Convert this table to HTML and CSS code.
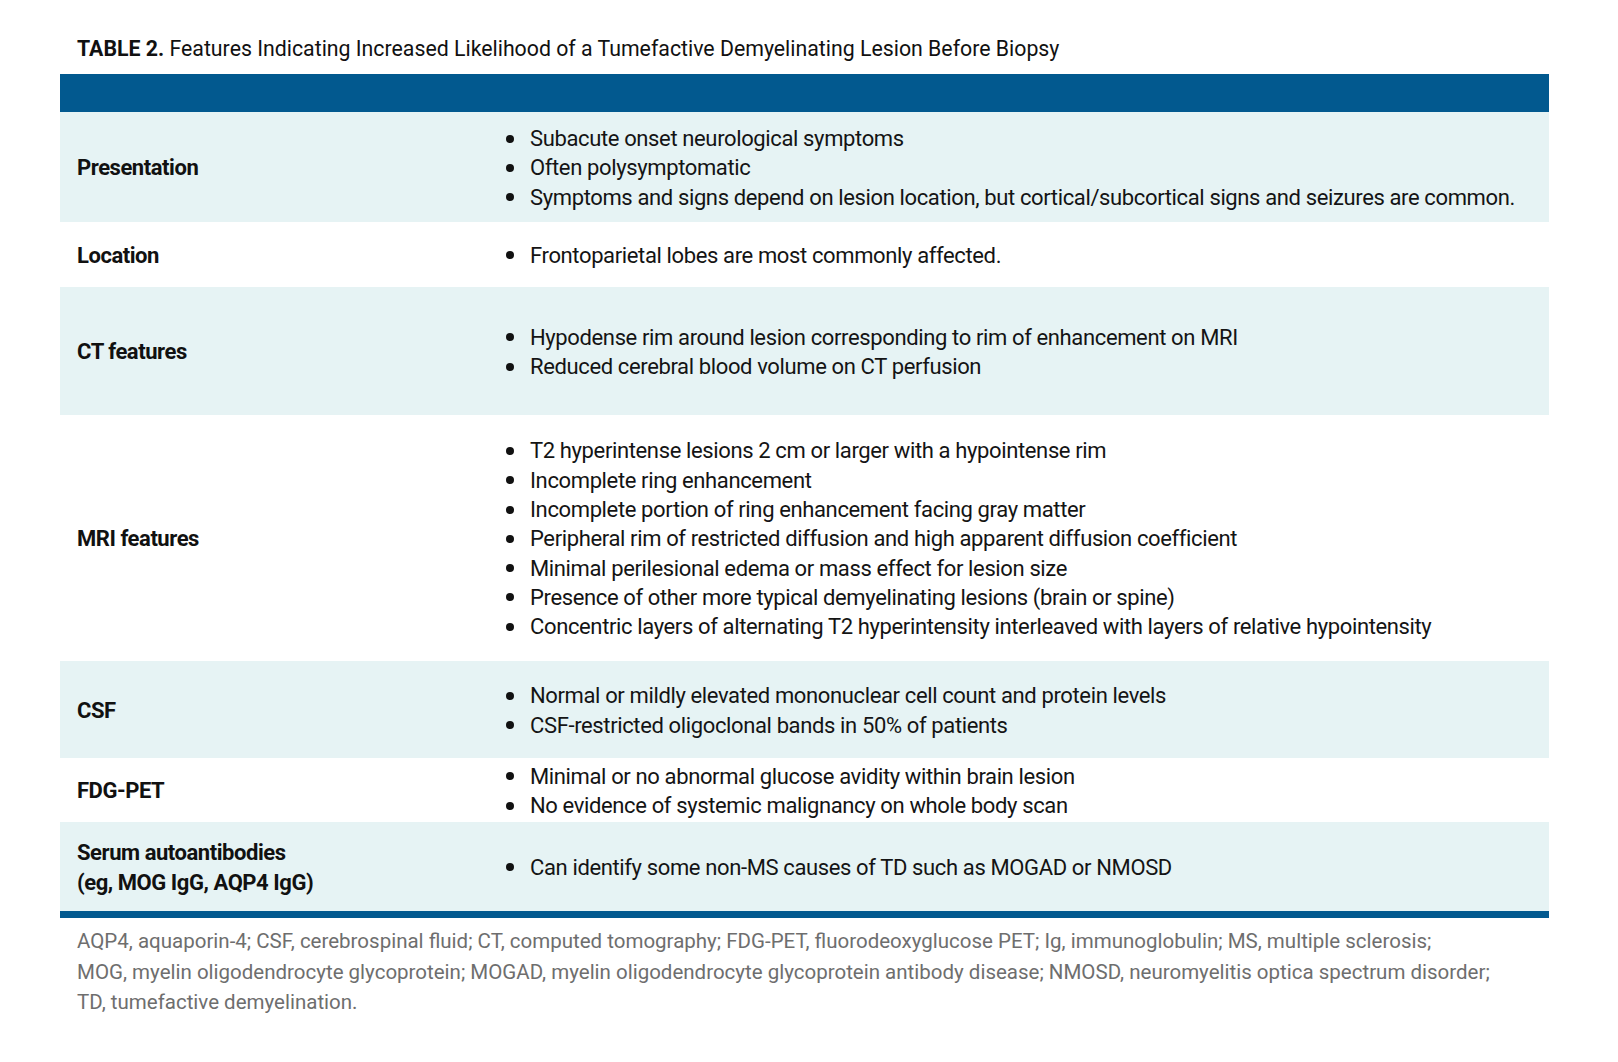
FILE: index.html
```html
<!DOCTYPE html>
<html lang="en">
<head>
<meta charset="utf-8">
<title>Table 2</title>
<link rel="stylesheet" href="styles.css">
</head>
<body>
<div class="page">
  <h1 class="title"><b>TABLE 2.</b> Features Indicating Increased Likelihood of a Tumefactive Demyelinating Lesion Before Biopsy</h1>
  <table class="tbl">
    <thead>
      <tr class="head"><th></th><th></th></tr>
    </thead>
    <tbody>
      <tr class="shade r-pres">
        <th>Presentation</th>
        <td><ul>
          <li>Subacute onset neurological symptoms</li>
          <li>Often polysymptomatic</li>
          <li>Symptoms and signs depend on lesion location, but cortical/subcortical signs and seizures are common.</li>
        </ul></td>
      </tr>
      <tr class="r-loc">
        <th>Location</th>
        <td><ul>
          <li>Frontoparietal lobes are most commonly affected.</li>
        </ul></td>
      </tr>
      <tr class="shade r-ct">
        <th>CT features</th>
        <td><ul>
          <li>Hypodense rim around lesion corresponding to rim of enhancement on MRI</li>
          <li>Reduced cerebral blood volume on CT perfusion</li>
        </ul></td>
      </tr>
      <tr class="r-mri">
        <th>MRI features</th>
        <td><ul>
          <li>T2 hyperintense lesions 2 cm or larger with a hypointense rim</li>
          <li>Incomplete ring enhancement</li>
          <li>Incomplete portion of ring enhancement facing gray matter</li>
          <li>Peripheral rim of restricted diffusion and high apparent diffusion coefficient</li>
          <li>Minimal perilesional edema or mass effect for lesion size</li>
          <li>Presence of other more typical demyelinating lesions (brain or spine)</li>
          <li>Concentric layers of alternating T2 hyperintensity interleaved with layers of relative hypointensity</li>
        </ul></td>
      </tr>
      <tr class="shade r-csf">
        <th>CSF</th>
        <td><ul>
          <li>Normal or mildly elevated mononuclear cell count and protein levels</li>
          <li>CSF-restricted oligoclonal bands in 50% of patients</li>
        </ul></td>
      </tr>
      <tr class="r-fdg">
        <th>FDG-PET</th>
        <td><ul>
          <li>Minimal or no abnormal glucose avidity within brain lesion</li>
          <li>No evidence of systemic malignancy on whole body scan</li>
        </ul></td>
      </tr>
      <tr class="shade r-serum">
        <th>Serum autoantibodies<br>(eg, MOG IgG, AQP4 IgG)</th>
        <td><ul>
          <li>Can identify some non-MS causes of TD such as MOGAD or NMOSD</li>
        </ul></td>
      </tr>
    </tbody>
  </table>
  <p class="note">AQP4, aquaporin-4; CSF, cerebrospinal fluid; CT, computed tomography; FDG-PET, fluorodeoxyglucose PET; Ig, immunoglobulin; MS, multiple sclerosis;<br>MOG, myelin oligodendrocyte glycoprotein; MOGAD, myelin oligodendrocyte glycoprotein antibody disease; NMOSD, neuromyelitis optica spectrum disorder;<br>TD, tumefactive demyelination.</p>
</div>
</body>
</html>
```
FILE: styles.css
```css
html, body {
  margin: 0;
  padding: 0;
  background: #ffffff;
}

body {
  font-family: Roboto, "Liberation Sans", Arial, sans-serif;
  color: #141414;
}

.page {
  width: 1489px;
  padding: 35px 0 0 60px;
}

.title {
  margin: 0 0 11px 0;
  padding-left: 17px;
  font-size: 21.3px;
  line-height: 28px;
  font-weight: 400;
  color: #111;
  white-space: nowrap;
}

.title b {
  font-weight: 700;
}

.tbl {
  width: 1489px;
  border-collapse: separate;
  border-spacing: 0;
  table-layout: fixed;
  border-bottom: 7px solid #02598f;
}

.tbl th,
.tbl td {
  padding: 2px 0 0 0;
  vertical-align: middle;
  text-align: left;
}

.tbl tr > th:first-child {
  width: 413px;
  padding-left: 17px;
  font-size: 22px;
  line-height: 30px;
  font-weight: 700;
  letter-spacing: -0.45px;
  color: #111;
}

.tbl td {
  padding-left: 15.5px;
  font-size: 22px;
  line-height: 29.3px;
  letter-spacing: -0.37px;
}

.head {
  height: 38px;
  background: #02598f;
}

.head th {
  padding: 0;
}

.shade {
  background: #e6f3f4;
}

.r-pres { height: 110px; }
.r-loc { height: 65px; }
.r-ct { height: 128px; }
.r-mri { height: 246px; }
.r-csf { height: 97px; }
.r-fdg { height: 64px; }
.r-serum { height: 89px; }

.tbl ul {
  margin: 0;
  padding: 0;
  list-style: none;
}

.tbl li {
  display: flex;
  align-items: flex-start;
  white-space: nowrap;
}

.tbl li::before {
  content: "";
  flex: 0 0 8px;
  width: 8px;
  height: 8px;
  margin: 10.5px 16.5px 0 0;
  border-radius: 50%;
  background: #111;
}

.note {
  margin: 8px 0 0 0;
  padding-left: 17px;
  font-size: 20.5px;
  line-height: 30.5px;
  color: #6e6e6e;
  white-space: nowrap;
}
```
